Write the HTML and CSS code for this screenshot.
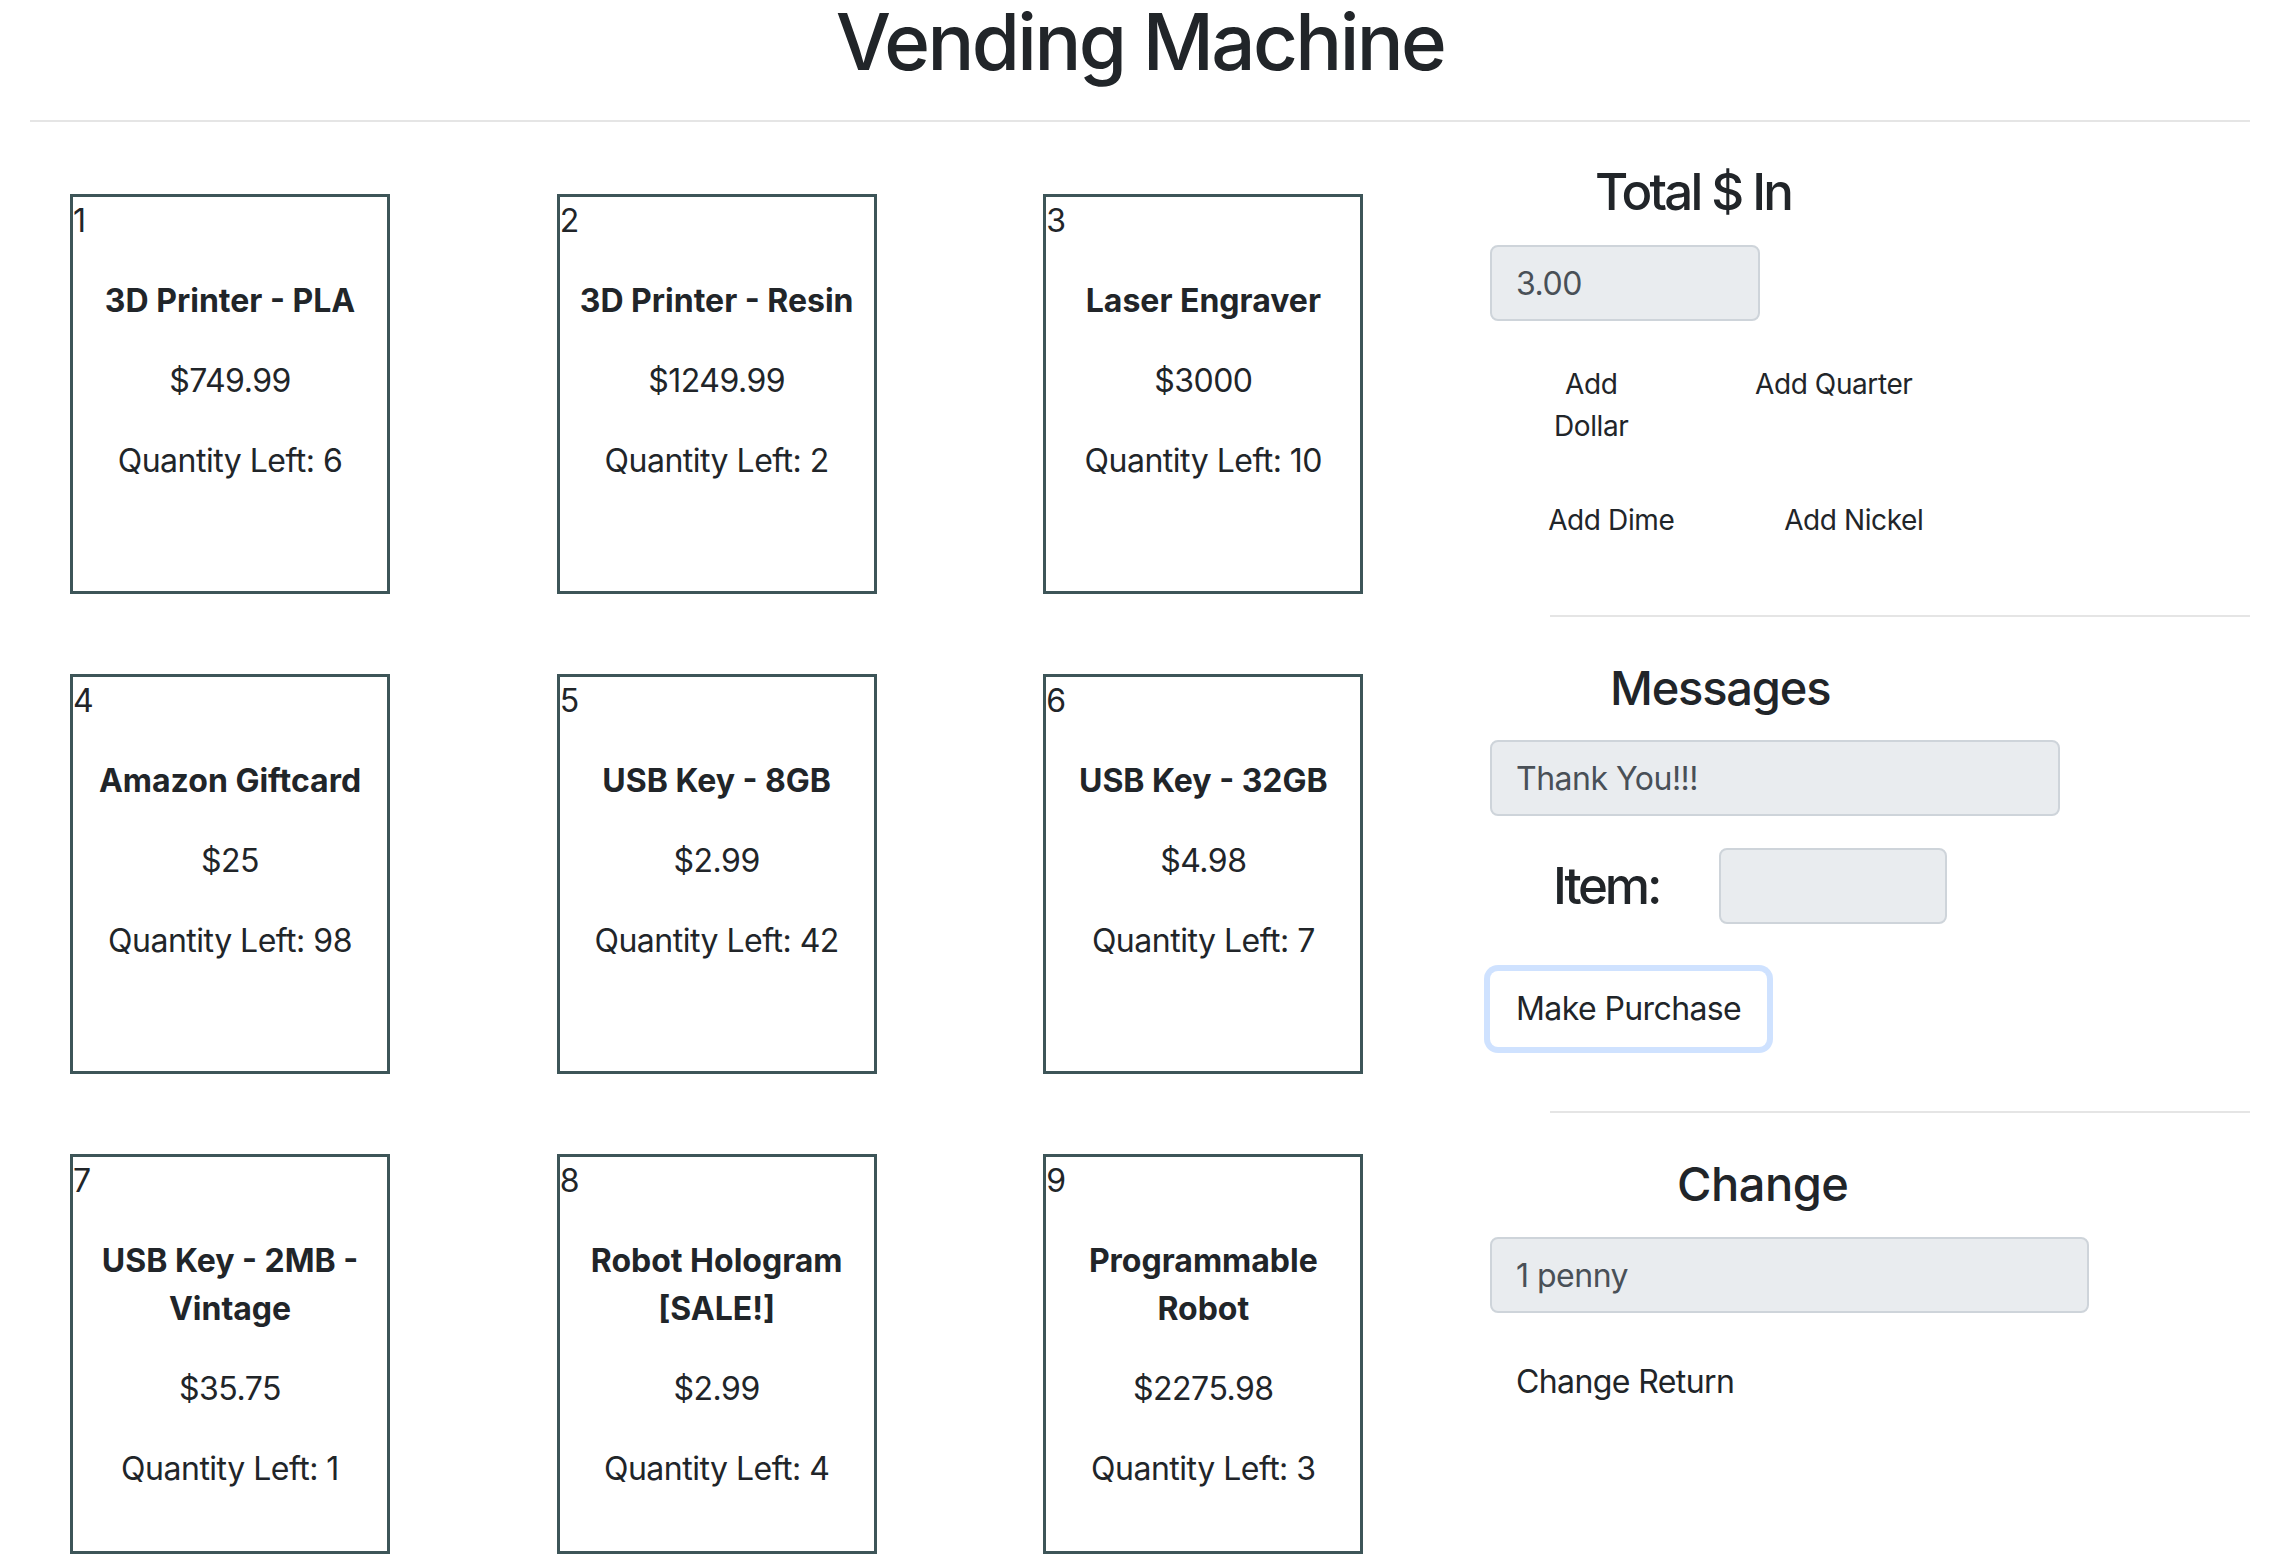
FILE: index.html
```html
<!DOCTYPE html>
<html lang="en">
<head>
<meta charset="utf-8">
<title>Vending Machine</title>
<link rel="stylesheet" href="styles.css">
</head>
<body>
<div class="page">
  <h1 class="title">Vending Machine</h1>
  <hr class="rule">
  <div class="main">
    <div class="items">
      <div class="card"><p class="card-num">1</p><p class="card-name">3D Printer - PLA</p><p>$749.99</p><p>Quantity Left: 6</p></div>
      <div class="card"><p class="card-num">2</p><p class="card-name">3D Printer - Resin</p><p>$1249.99</p><p>Quantity Left: 2</p></div>
      <div class="card"><p class="card-num">3</p><p class="card-name">Laser Engraver</p><p>$3000</p><p>Quantity Left: 10</p></div>
      <div class="card"><p class="card-num">4</p><p class="card-name">Amazon Giftcard</p><p>$25</p><p>Quantity Left: 98</p></div>
      <div class="card"><p class="card-num">5</p><p class="card-name">USB Key - 8GB</p><p>$2.99</p><p>Quantity Left: 42</p></div>
      <div class="card"><p class="card-num">6</p><p class="card-name">USB Key - 32GB</p><p>$4.98</p><p>Quantity Left: 7</p></div>
      <div class="card"><p class="card-num">7</p><p class="card-name">USB Key - 2MB - Vintage</p><p>$35.75</p><p>Quantity Left: 1</p></div>
      <div class="card"><p class="card-num">8</p><p class="card-name">Robot Hologram [SALE!]</p><p>$2.99</p><p>Quantity Left: 4</p></div>
      <div class="card"><p class="card-num">9</p><p class="card-name">Programmable Robot</p><p>$2275.98</p><p>Quantity Left: 3</p></div>
    </div>
    <div class="panel">
      <h3 class="panel-title">Total $ In</h3>
      <input class="field field--total" type="text" value="3.00" readonly>
      <div class="coins">
        <div class="coin-row coin-row--shift">
          <button class="coin-btn coin-btn--narrow" type="button">Add Dollar</button>
          <button class="coin-btn" type="button">Add Quarter</button>
        </div>
        <div class="coin-row">
          <button class="coin-btn" type="button">Add Dime</button>
          <button class="coin-btn" type="button">Add Nickel</button>
        </div>
      </div>
      <hr class="panel-rule">
      <h4 class="panel-sub panel-sub--messages">Messages</h4>
      <input class="field field--message" type="text" value="Thank You!!!" readonly>
      <div class="item-row">
        <label class="item-label">Item:</label>
        <input class="field field--item" type="text" value="" readonly>
      </div>
      <button class="action-btn action-btn--focus" type="button">Make Purchase</button>
      <hr class="panel-rule panel-rule--second">
      <h4 class="panel-sub panel-sub--change">Change</h4>
      <input class="field field--change" type="text" value="1 penny" readonly>
      <button class="action-btn action-btn--return" type="button">Change Return</button>
    </div>
  </div>
</div>
</body>
</html>
```
FILE: styles.css
```css
* { box-sizing: border-box; }
html, body { margin: 0; padding: 0; }
body {
  font-family: Inter, "Liberation Sans", sans-serif;
  font-size: 32px;
  line-height: 48px;
  color: #212529;
  background: #fff;
  letter-spacing: -0.5px;
}
.page { padding: 0 30px; }
.title {
  margin: 0;
  font-size: 78px;
  line-height: 84px;
  font-weight: 500;
  letter-spacing: -2.6px;
  text-align: center;
}
.rule {
  margin: 36px 0 32px;
  border: 0;
  border-top: 2px solid rgba(0,0,0,.1);
  height: 0;
}
.main { display: flex; align-items: flex-start; }
.items {
  width: 1460px;
  flex: none;
  display: grid;
  grid-template-columns: repeat(3, 1fr);
}
.card {
  margin: 40px 0 40px 40px;
  width: 320px;
  height: 400px;
  border: 3px solid #3d5558;
  text-align: center;
}
.card p { margin: 0 0 32px; }
.card .card-num { text-align: left; letter-spacing: 0; }
.card .card-name { font-weight: 700; letter-spacing: 0; }

.panel {
  flex: 1;
  display: flex;
  flex-direction: column;
  align-items: flex-start;
}
.panel-title {
  margin: 7px 0 0 105px;
  font-size: 51px;
  line-height: 62px;
  font-weight: 500;
  letter-spacing: -2.8px;
}
.field {
  display: block;
  height: 76px;
  padding: 12px 24px;
  border: 2px solid #ced4da;
  border-radius: 8px;
  background: #e9ecef;
  color: #495057;
  font: inherit;
  letter-spacing: -0.5px;
  line-height: 48px;
  outline: none;
}
.field--total { width: 270px; margin-top: 22px; }
.coins { margin-top: 32px; }
.coin-row {
  display: grid;
  grid-template-columns: 242.5px 242.5px;
  align-items: start;
}
.coin-row + .coin-row { margin-top: 32px; }
.coin-row--shift { margin-left: -20px; }
.coin-btn {
  justify-self: center;
  font-family: inherit;
  font-size: 28px;
  line-height: 42px;
  letter-spacing: -0.4px;
  padding: 8px 16px;
  border: 2px solid transparent;
  border-radius: 6px;
  background: none;
  color: #212529;
  text-align: center;
}
.coin-btn--narrow { width: 116px; }
.panel-rule {
  align-self: stretch;
  margin: 64px 0 32px 60px;
  border: 0;
  border-top: 2px solid rgba(0,0,0,.1);
  height: 0;
}
.panel-sub {
  margin: 11px 0 0;
  font-size: 47px;
  line-height: 56px;
  font-weight: 500;
}
.panel-sub--messages { margin-left: 120px; letter-spacing: -1.2px; }
.panel-sub--change { margin-left: 187px; letter-spacing: -0.5px; }
.field--message { width: 570px; margin-top: 24px; }
.item-row {
  display: flex;
  align-items: center;
  margin-top: 32px;
  padding-left: 63px;
}
.item-label {
  width: 166px;
  font-size: 51px;
  line-height: 62px;
  font-weight: 500;
  letter-spacing: -3.2px;
}
.field--item { width: 228px; }
.action-btn {
  display: block;
  font: inherit;
  letter-spacing: -0.6px;
  line-height: 48px;
  padding: 12px 24px;
  border: 2px solid transparent;
  border-radius: 8px;
  background: #fff;
  color: #212529;
  text-align: left;
}
.action-btn--focus {
  margin-top: 47px;
  box-shadow: 0 0 0 6px rgba(13,110,253,.2);
}
.panel-rule--second { margin-top: 64px; }
.field--change { width: 599px; margin-top: 25px; }
.action-btn--return { margin-top: 31px; }
```
